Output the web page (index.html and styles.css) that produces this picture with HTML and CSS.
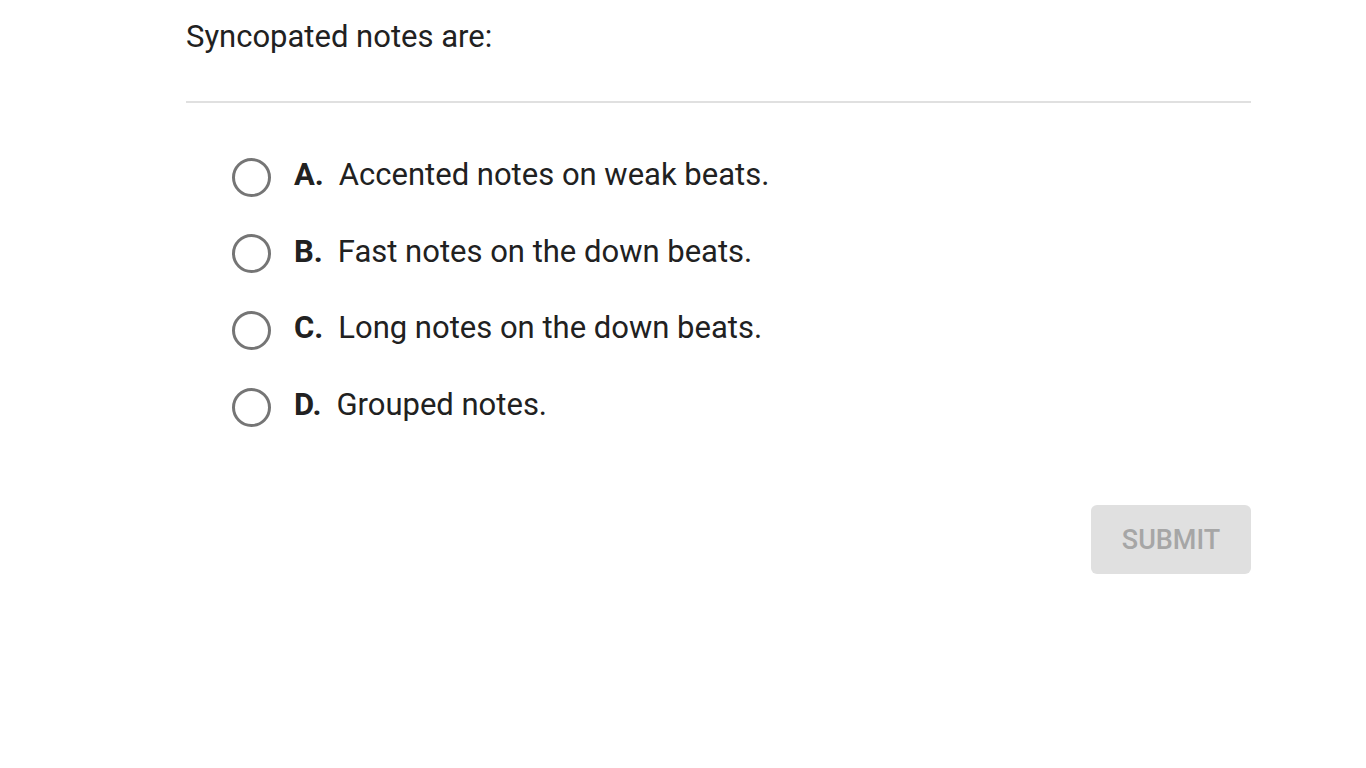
FILE: index.html
```html
<!DOCTYPE html>
<html>
<head>
<meta charset="utf-8">
<link rel="stylesheet" href="styles.css">
</head>
<body>
<div class="quiz">
  <div class="question">Syncopated notes are:</div>
  <div class="divider"></div>
  <div class="options">
    <label class="option"><span class="radio"></span><span class="letter">A.</span><span class="text">Accented notes on weak beats.</span></label>
    <label class="option"><span class="radio"></span><span class="letter">B.</span><span class="text">Fast notes on the down beats.</span></label>
    <label class="option"><span class="radio"></span><span class="letter">C.</span><span class="text">Long notes on the down beats.</span></label>
    <label class="option"><span class="radio"></span><span class="letter">D.</span><span class="text">Grouped notes.</span></label>
  </div>
  <div class="actions">
    <button class="submit">SUBMIT</button>
  </div>
</div>
</body>
</html>
```
FILE: styles.css
```css
html, body {
  margin: 0;
  padding: 0;
  background: #ffffff;
}
body {
  font-family: Roboto, "Liberation Sans", sans-serif;
  color: #212121;
}
.quiz {
  width: 1065px;
  margin-left: 186px;
}
.question {
  font-size: 31px;
  line-height: 36px;
  padding-top: 19px;
  height: 47px;
}
.divider {
  margin-top: 35px;
  height: 2px;
  background: #e0e0e0;
}
.options {
  display: flex;
  flex-direction: column;
  padding-left: 46px;
  padding-top: 55px;
  gap: 38.7px;
}
.option {
  display: flex;
  align-items: center;
  height: 38px;
  font-size: 31px;
  line-height: 38px;
}
.radio {
  width: 33px;
  height: 33px;
  border: 3px solid #757575;
  border-radius: 50%;
  flex: none;
}
.letter,
.text {
  position: relative;
  top: -2px;
}
.letter {
  font-weight: 700;
  margin-left: 23px;
  margin-right: 15px;
}
.actions {
  display: flex;
  justify-content: flex-end;
  padding-top: 79px;
}
.submit {
  width: 160px;
  height: 69px;
  border: none;
  border-radius: 6px;
  background: #e0e0e0;
  color: #a6a6a6;
  font-family: Roboto, "Liberation Sans", sans-serif;
  font-weight: 500;
  font-size: 27px;
  padding: 0;
}
```
